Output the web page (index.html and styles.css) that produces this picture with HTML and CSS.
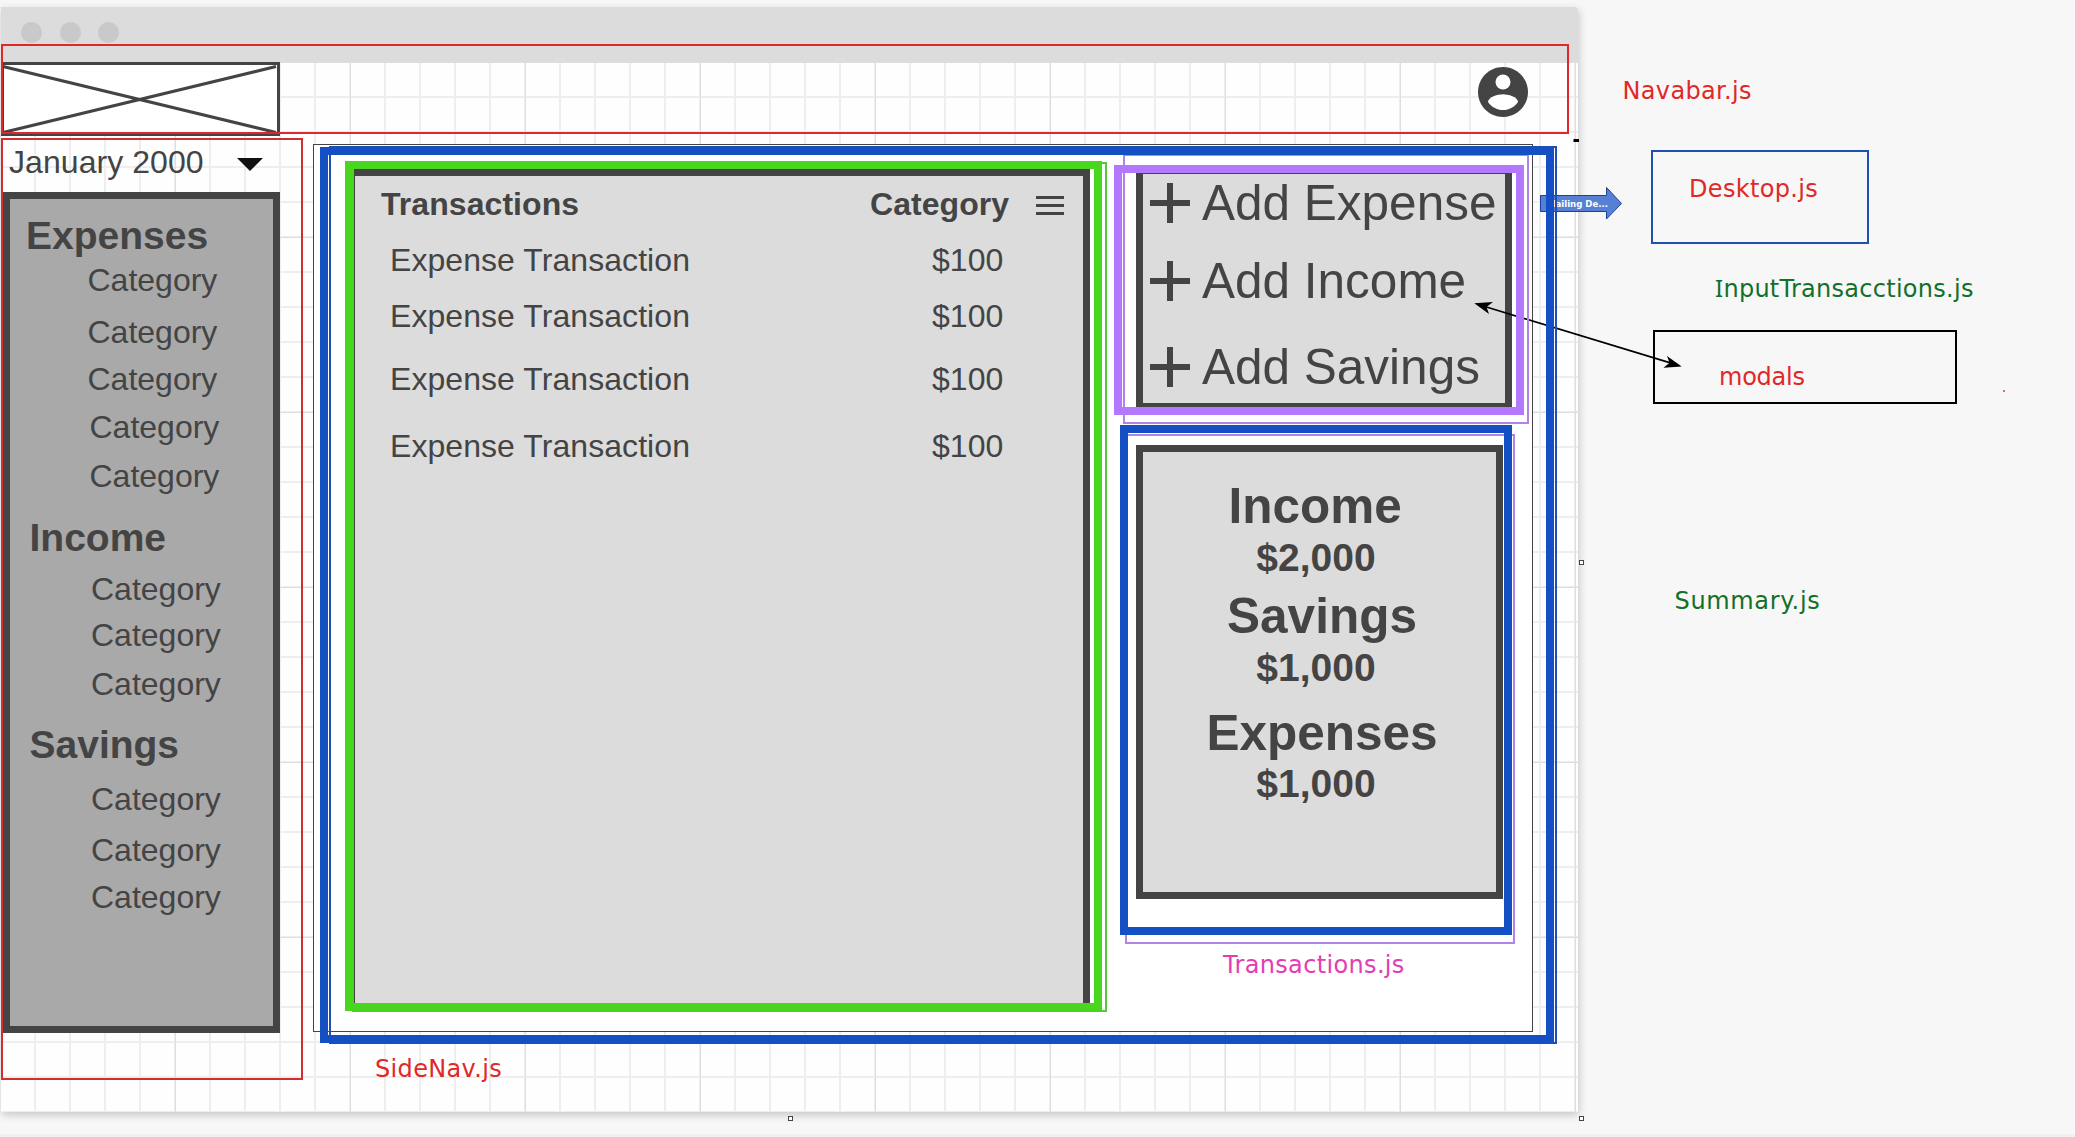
FILE: index.html
```html
<!DOCTYPE html>
<html lang="en">
<head>
<meta charset="utf-8">
<title>Budget app wireframe</title>
<link rel="stylesheet" href="styles.css">
</head>
<body>
<div class="board">
  <main class="window">
    <header class="titlebar"><i></i><i></i><i></i></header>
    <nav class="navbar">
      <svg class="logo" width="279" height="74" viewBox="0 0 279 74"><rect x="1.5" y="1.5" width="276" height="71" fill="#fff" stroke="#444" stroke-width="3"/><path d="M2 4.5 275 70.5M2 70.5 275 4.5" stroke="#444" stroke-width="3.2"/></svg>
      <svg class="account" width="60" height="60" viewBox="0 0 24 24"><path fill="#444" d="M12 2C6.48 2 2 6.48 2 12s4.480 10 10 10 10-4.480 10-10S17.520 2 12 2z"/><circle cx="12" cy="8" r="3" fill="#fff"/><path fill="#fff" d="M12 19.200c-2.500 0-4.710-1.280-6-3.220.03-1.990 4-3.080 6-3.080s5.970 1.090 6 3.080c-1.290 1.940-3.500 3.220-6 3.220z"/></svg>
    </nav>
    <div class="content">
      <aside class="side">
        <div class="month"><span>January 2000</span><b class="caret"></b></div>
        <div class="sidepanel">
          <h3 class="g1">Expenses</h3>
          <p class="a1">Category</p><p class="a2">Category</p><p class="a3">Category</p><p class="a4">Category</p><p class="a5">Category</p>
          <h3 class="g2">Income</h3>
          <p class="b1">Category</p><p class="b2">Category</p><p class="b3">Category</p>
          <h3 class="g3">Savings</h3>
          <p class="c1">Category</p><p class="c2">Category</p><p class="c3">Category</p>
        </div>
      </aside>
      <section class="desktop">
        <div class="transactions">
          <div class="row head"><span>Transactions</span><span class="amount">Category</span>
            <svg width="28" height="19" viewBox="0 0 28 19"><path d="M0 1.500H28M0 9.500H28M0 17.500H28" stroke="#444" stroke-width="3"/></svg></div>
          <div class="row r1"><span>Expense Transaction</span><span class="amount">$100</span></div>
          <div class="row r2"><span>Expense Transaction</span><span class="amount">$100</span></div>
          <div class="row r3"><span>Expense Transaction</span><span class="amount">$100</span></div>
          <div class="row r4"><span>Expense Transaction</span><span class="amount">$100</span></div>
        </div>
        <div class="right">
          <div class="inputs">
            <div class="add d1"><b class="plus"></b><span>Add Expense</span></div>
            <div class="add d2"><b class="plus"></b><span>Add Income</span></div>
            <div class="add d3"><b class="plus"></b><span>Add Savings</span></div>
          </div>
          <div class="summary">
            <h2 class="s1">Income</h2><strong class="v1">$2,000</strong>
            <h2 class="s2">Savings</h2><strong class="v2">$1,000</strong>
            <h2 class="s3">Expenses</h2><strong class="v3">$1,000</strong>
          </div>
        </div>
      </section>
    </div>
  </main>

  <svg class="links" width="2075" height="1137" viewBox="0 0 2075 1137">
    <path d="M1540.500 195.500H1606.500V187.500L1621.500 203.500 1606.500 219V211.500H1540.500Z" fill="#5580d4" stroke="#1a4298"/>
    <text x="1547" y="207" textLength="61" lengthAdjust="spacingAndGlyphs" class="arrowtext">Mailing De...</text>
    <path d="M1484 306.300 1672 363.400" stroke="#000" stroke-width="1.700"/>
    <path d="M1474.300 303.200 1493 302 1486.500 307 1489 314Z"/>
    <path d="M1681.700 366.400 1663.500 367.700 1669.500 362.700 1667 356Z"/>
    <path d="M1573.500 139H1579V142H1573.500Z"/>
    <path d="M2003 390h2v2h-2z" fill="#d07070"/>
  </svg>

  <div class="frame red navframe"></div>
  <div class="frame red sideframe"></div>
  <div class="frame lilac inputthin"></div>
  <div class="frame lilac summarythin"></div>
  <div class="frame bluethin deskthin"></div>
  <div class="frame blue deskthick"></div>
  <div class="frame greenthin txthin"></div>
  <div class="frame green txthick"></div>
  <div class="frame purple inputthick"></div>
  <div class="frame blue summarythick"></div>
  <div class="frame bluethin desktopbox"></div>
  <div class="frame black modalbox"></div>
  <i class="handle h1"></i><i class="handle h2"></i><i class="handle h3"></i>

  <span class="note n1">Navabar.js</span>
  <span class="note n2">Desktop.js</span>
  <span class="note n3"><span class="serif-i">I</span>nputTransacctions.js</span>
  <span class="note n4">modals</span>
  <span class="note n5">Summary.js</span>
  <span class="note n6">Transactions.js</span>
  <span class="note n7">SideNav.js</span>
</div>
</body>
</html>
```
FILE: styles.css
```css
* { box-sizing: border-box; }
body { margin: 0; background: #f7f7f7; font-family: "Liberation Sans", Arial, sans-serif; color: #444; }
h2, h3, p { margin: 0; }
.board { position: relative; width: 2075px; height: 1137px; overflow: hidden; padding: 7px 0 0 1px; border-bottom: 3px solid #f0f0f0; }

/* browser window */
.window { width: 1577px; height: 1105px; box-shadow: 1px 3px 8px rgba(0,0,0,.2); background-color: #fefefe; display: flex; flex-direction: column;
  background-image:
    linear-gradient(90deg, #dedede 1px, transparent 1px), linear-gradient(#dedede 1px, transparent 1px),
    linear-gradient(90deg, #eee 2px, transparent 2px), linear-gradient(#eee 2px, transparent 2px);
  background-size: 175px 175px, 175px 175px, 35px 35px, 35px 35px;
  background-position: 174px 0, 0 55px, 33px 0, 0 19px;
  border-top-right-radius: 4px; }
.titlebar { height: 55px; background: #dcdcdc; display: flex; gap: 17.500px; padding: 15px 0 0 20px; border-top-right-radius: 4px; }
.titlebar i { width: 21px; height: 21px; border-radius: 50%; background: #c9c9c9; }
.navbar { height: 74px; display: flex; justify-content: space-between; padding-right: 45px; }
.logo, .account { display: block; }

.content { display: flex; }
.side { width: 312px; }
.month { height: 56px; display: flex; font-size: 32px; line-height: 36px; padding: 8px 0 0 8px; letter-spacing: .06px; }
.month span { width: 228px; }
.caret { width: 26px; height: 13px; margin-top: 14px; background: #111; clip-path: polygon(0 0, 100% 0, 50% 100%); }
.sidepanel { margin-left: 2px; width: 277px; height: 841px; border: 7px solid #444; background: #a9a9a9; overflow: hidden; }
.sidepanel h3 { font-size: 39px; line-height: 44px; height: 44px; padding-left: 19.500px; }
.sidepanel p { font-size: 32px; line-height: 36px; height: 36px; padding-left: 81px; }
.sidepanel .g1 { margin-top: 15px; padding-left: 16px; }
.sidepanel .a1, .sidepanel .a2, .sidepanel .a3 { padding-left: 77.500px; }
.sidepanel .a4, .sidepanel .a5 { padding-left: 79.500px; }
.a1 { margin-top: 4px; } .a2 { margin-top: 16px; } .a3 { margin-top: 11px; } .a4 { margin-top: 12px; } .a5 { margin-top: 13px; }
.sidepanel .g2 { margin-top: 22px; } .b1 { margin-top: 11px; } .b2 { margin-top: 10px; } .b3 { margin-top: 13px; }
.sidepanel .g3 { margin-top: 21px; } .c1 { margin-top: 14px; } .c2 { margin-top: 15px; } .c3 { margin-top: 11px; }

/* main canvas */
.desktop { width: 1220px; height: 888px; margin-top: 8px; border: 1px solid #444; background: #fff; display: flex; padding: 24px 0 0 34px; }
.transactions { width: 742px; height: 841px; border: 7px solid #444; background: #dcdcdc; }
.row { display: flex; font-size: 32px; line-height: 36px; height: 36px; padding-left: 35px; letter-spacing: .06px; }
.row span:first-child { width: 542px; }
.head { font-weight: bold; margin-top: 10px; padding-left: 26px; }
.row.head span:first-child { width: 489px; }
.head .amount { width: 166px; }
.head svg { margin-top: 10px; }
.r1 { margin-top: 20px; } .r2 { margin-top: 20px; } .r3 { margin-top: 27px; } .r4 { margin-top: 31px; }
.right { padding-left: 46px; margin-top: -2px; }
.inputs { width: 376px; height: 243px; border: 7px solid #444; background: #dcdcdc; }
.add { display: flex; align-items: center; gap: 12px; padding-left: 7px; font-size: 49.500px; line-height: 56px; height: 56px; white-space: nowrap; }
.plus { width: 40px; height: 40px; background: linear-gradient(#444, #444) 50% 50% / 40px 6px no-repeat, linear-gradient(#444, #444) 50% 50% / 6px 40px no-repeat; }
.d1 { margin-top: 1px; } .d2 { margin-top: 22px; } .d3 { margin-top: 30px; }
.summary { margin-top: 35px; width: 367px; height: 454px; border: 7px solid #444; background: #dcdcdc; display: flex; flex-direction: column; align-items: center; }
.summary h2 { font-size: 49.500px; line-height: 56px; height: 56px; padding-left: 5px; }
.summary strong { font-size: 39px; line-height: 44px; height: 44px; padding-right: 7px; }
.summary .s1 { margin-top: 26px; padding: 0 8.500px 0 0; } .s2 { margin-top: 8px; } .s3 { margin-top: 15px; }
.v1 { margin-top: 2px; } .v2 { margin-top: 2px; } .v3 { margin-top: 1px; }

/* annotations laid over the wireframe */
.links { position: absolute; left: 0; top: 0; }
.arrowtext { font: bold 9.500px "DejaVu Sans", sans-serif; fill: #fff; }
.frame { position: absolute; border: 2px solid; }
.red { border-color: #e12828; } .black { border-color: #000; } .lilac { border-color: #b083e6; }
.bluethin { border-color: #1f50b0; } .greenthin { border-color: #55c838; }
.blue { border: 8px solid #144fc4; } .green { border: 8px solid #49d61f; } .purple { border: 8px solid #b478ff; }
.navframe { left: 1px; top: 44px; width: 1568px; height: 90px; }
.sideframe { left: 1px; top: 138px; width: 302px; height: 942px; border-color: #d22e30; }
.inputthin { left: 1123px; top: 154px; width: 406px; height: 270px; }
.summarythin { left: 1125px; top: 434px; width: 390px; height: 510px; }
.deskthin { left: 329px; top: 146px; width: 1228px; height: 898px; }
.deskthick { left: 320px; top: 147px; width: 1234px; height: 896px; }
.txthin { left: 352px; top: 162px; width: 755px; height: 850px; }
.txthick { left: 345px; top: 161px; width: 757px; height: 850px; }
.inputthick { left: 1114px; top: 165px; width: 410px; height: 250px; }
.summarythick { left: 1120px; top: 425px; width: 392px; height: 510px; }
.desktopbox { left: 1651px; top: 150px; width: 218px; height: 94px; }
.modalbox { left: 1653px; top: 330px; width: 304px; height: 74px; }
.handle { position: absolute; width: 5px; height: 5px; border: 1px solid #444; background: #fff; }
.h1 { left: 1579px; top: 560px; } .h2 { left: 1579px; top: 1116px; } .h3 { left: 788px; top: 1116px; }
.note { position: absolute; font: 24px/28px Verdana, "DejaVu Sans", sans-serif; letter-spacing: .34px; white-space: nowrap; color: #e12828; }
.serif-i { font-family: "Noto Sans", sans-serif; }
.n1 { left: 1622.500px; top: 77px; } .n2 { left: 1689px; top: 175px; }
.n3 { left: 1715px; top: 274px; color: #12702a; letter-spacing: .27px; }
.n4 { left: 1719px; top: 363px; letter-spacing: -.25px; }
.n5 { left: 1674.500px; top: 587px; color: #12702a; letter-spacing: .65px; }
.n6 { left: 1223px; top: 951px; color: #e33db5; }
.n7 { left: 375px; top: 1055px; }
```
